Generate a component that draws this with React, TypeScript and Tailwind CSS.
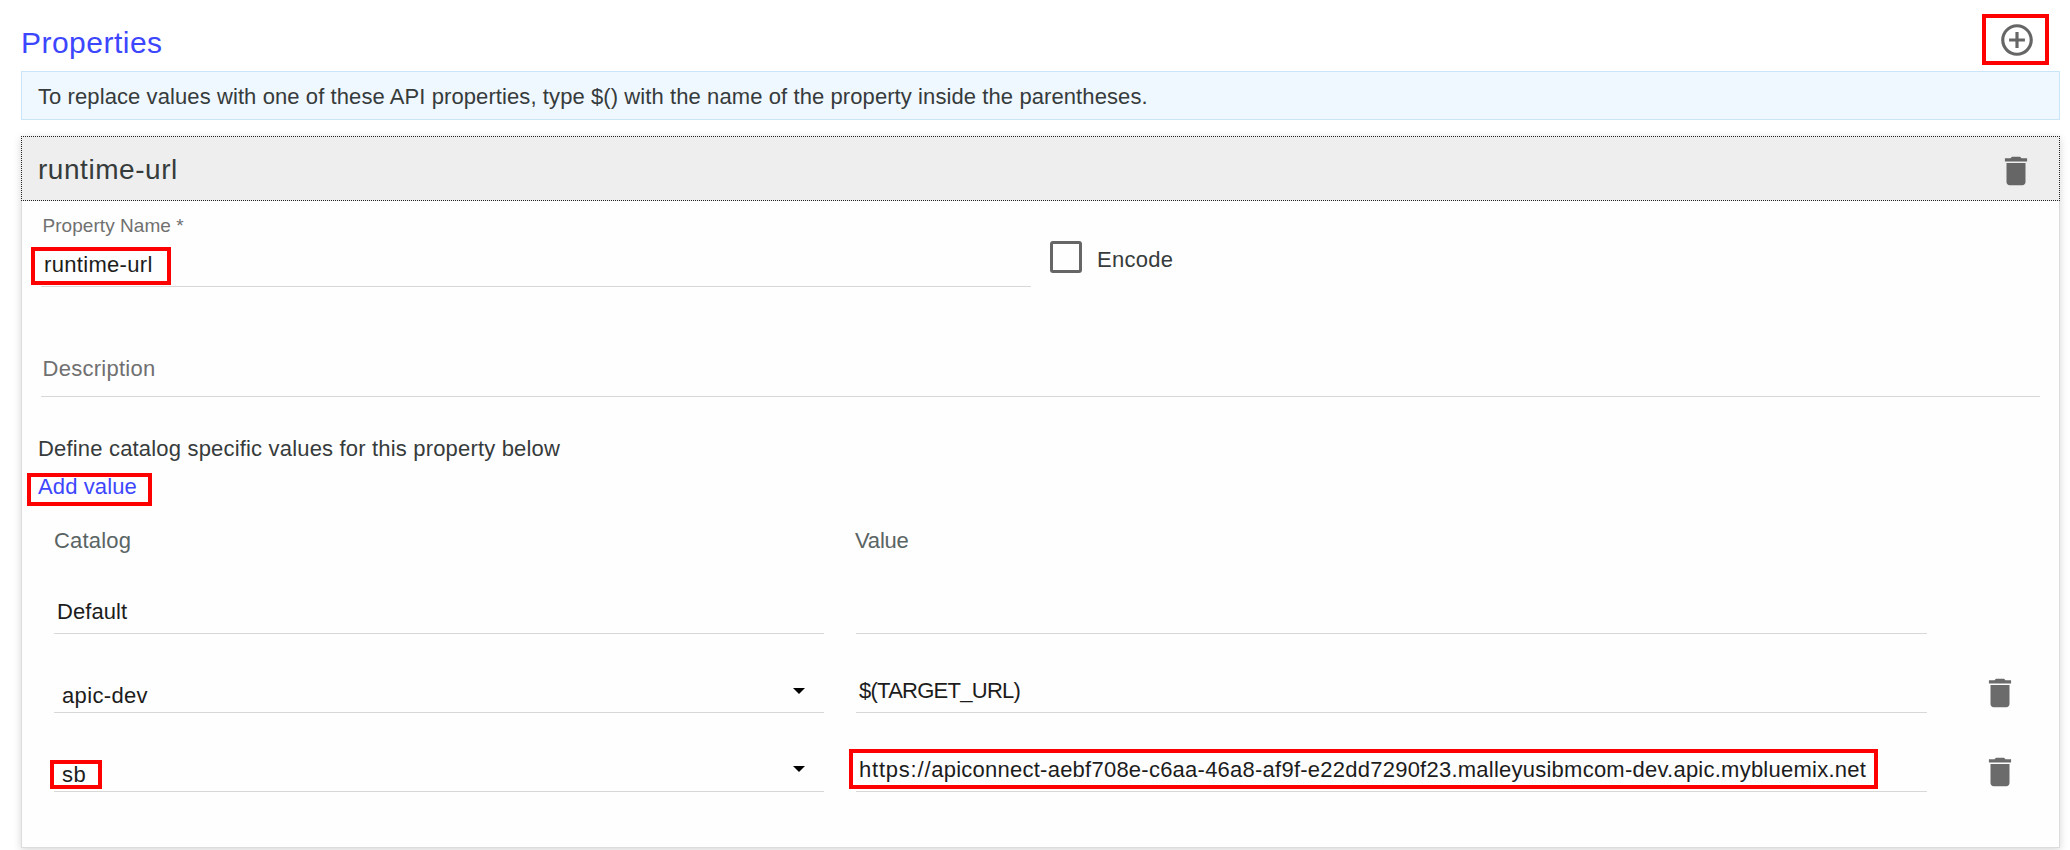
import type { ReactNode } from "react";

function TrashIcon({ className = "" }: { className?: string }) {
  return (
    <svg viewBox="0 0 24 24" className={`h-[38px] w-[38px] shrink-0 ${className}`} fill="currentColor">
      <path d="M6 19c0 1.1.9 2 2 2h8c1.1 0 2-.9 2-2V7H6v12zM19 4h-3.5l-1-1h-5l-1 1H5v2h14V4z" />
    </svg>
  );
}

function AddCircleIcon() {
  return (
    <svg viewBox="0 0 24 24" className="h-[38px] w-[38px] shrink-0 text-[#666666]" fill="currentColor">
      <path d="M13 7h-2v4H7v2h4v4h2v-4h4v-2h-4V7zm-1-5C6.48 2 2 6.48 2 12s4.48 10 10 10 10-4.48 10-10S17.52 2 12 2zm0 18c-4.41 0-8-3.59-8-8s3.59-8 8-8 8 3.59 8 8-3.59 8-8 8z" />
    </svg>
  );
}

function Caret({ className }: { className: string }) {
  return (
    <svg viewBox="0 0 12 6" className={`mr-[19px] h-[6px] w-[12px] shrink-0 ${className}`} fill="#000">
      <path d="M0 0h12L6 6z" />
    </svg>
  );
}

/** Content with a red callout frame laid over it. */
function Marked({ frame, children }: { frame: string; children: ReactNode }) {
  return (
    <div className="relative w-fit">
      {children}
      <div className={`pointer-events-none absolute border-4 border-[#ff0000] ${frame}`} />
    </div>
  );
}

function ValueRow({ catalog, value, caret }: { catalog: ReactNode; value: ReactNode; caret: string }) {
  return (
    <div className="flex h-[79px] text-[#1c1c1c]">
      <div className="flex w-[770px] justify-between border-b border-[#d8d8d8] pl-2">
        <div className="pt-[49px]">{catalog}</div>
        <Caret className={caret} />
      </div>
      <div className="ml-8 w-[1071px] border-b border-[#d8d8d8] pt-11 pl-[3px]">{value}</div>
      <TrashIcon className="mt-10 ml-[54px] text-[#6b6b6b]" />
    </div>
  );
}

export default function App() {
  return (
    <div className="h-[850px] w-[2070px] overflow-hidden bg-white pr-[10px] pl-[21px] font-['Liberation_Sans',sans-serif] text-[22px] leading-[25px] whitespace-nowrap text-[#363b3b]">
      <header className="flex h-[71px] justify-between">
        <h1 className="mt-[26px] text-[30px] leading-[33px] tracking-[0.48px] text-[#3d46ff]">Properties</h1>
        <div className="mt-[21px] mr-[24px]">
          <Marked frame="-top-[7px] -left-4 h-[51px] w-[67px]">
            <AddCircleIcon />
          </Marked>
        </div>
      </header>

      <div className="h-[49px] border border-[#cbe5f8] bg-[#eff7ff] pt-3 pl-4 tracking-[0.09px]">
        To replace values with one of these API properties, type $() with the name of the property inside the parentheses.
      </div>

      <section className="mt-4 h-[712px] shadow-[0_2px_8px_rgba(0,0,0,0.16)]">
        <div className="flex h-[65px] justify-between border border-dotted border-[#222222] bg-[#eeeeee]">
          <h2 className="mt-[17px] ml-4 text-[28px] leading-[31px] tracking-[0.55px]">runtime-url</h2>
          <TrashIcon className="mt-[15px] mr-[24px] text-[#666666]" />
        </div>

        <div className="h-[647px] border-x border-b border-[#dcdcdc] bg-[#fefefe]">
          <div className="flex h-[86px] pl-[19px]">
            <div className="w-[990px] border-b border-[#d8d8d8] pt-[14px]">
              <div className="pl-[1.5px] text-[19px] leading-[21px] tracking-[0.05px] text-[#707070]">Property Name *</div>
              <div className="mt-4 pl-[3px] tracking-[0.32px] text-[#1c1c1c]">
                <Marked frame="-top-[5px] -left-[13px] h-[38px] w-[140px]">runtime-url</Marked>
              </div>
            </div>
            <div className="mt-10 ml-[19px] h-8 w-8 rounded-[3px] border-[3px] border-[#666666]" />
            <div className="mt-[46px] ml-[15px] tracking-[0.25px]">Encode</div>
          </div>

          <div className="ml-[19px] h-[110px] w-[1999px] border-b border-[#d8d8d8] pt-[69px] pl-[1.5px] tracking-[0.27px] text-[#707070]">
            Description
          </div>

          <div className="mt-[39px] ml-4 tracking-[0.18px]">Define catalog specific values for this property below</div>
          <div className="mt-[13px] ml-4 tracking-[0.12px] text-[#3d46ff]">
            <Marked frame="-top-px -left-[11px] h-[33px] w-[125px]">Add value</Marked>
          </div>

          <div className="mt-[29px] pl-8">
            <div className="flex text-[#5a6464]">
              <div className="w-[801px] tracking-[0.2px]">Catalog</div>
              <div className="tracking-[-0.2px]">Value</div>
            </div>
            <div className="flex h-[81px] gap-8 text-[#1c1c1c]">
              <div className="w-[770px] border-b border-[#d8d8d8] pt-[46px] pl-[3px] tracking-[0.05px]">Default</div>
              <div className="w-[1071px] border-b border-[#d8d8d8]" />
            </div>
            <ValueRow
              caret="mt-[54px]"
              catalog={<div className="tracking-[0.35px]">apic-dev</div>}
              value={<div className="tracking-[-0.74px]">$(TARGET_URL)</div>}
            />
            <ValueRow
              caret="mt-[53px]"
              catalog={
                <Marked frame="-top-[2px] -left-3 h-[29px] w-[52px]">
                  <span className="tracking-[0.5px]">sb</span>
                </Marked>
              }
              value={
                <Marked frame="-top-2 -left-[10px] h-[40px] w-[1029px]">
                  <span className="tracking-[0.78px]">https://</span>
                  <span className="tracking-[0.24px]">
                    apiconnect-aebf708e-c6aa-46a8-af9f-e22dd7290f23.malleyusibmcom-dev.apic.mybluemix.net
                  </span>
                </Marked>
              }
            />
          </div>
        </div>
      </section>
    </div>
  );
}
